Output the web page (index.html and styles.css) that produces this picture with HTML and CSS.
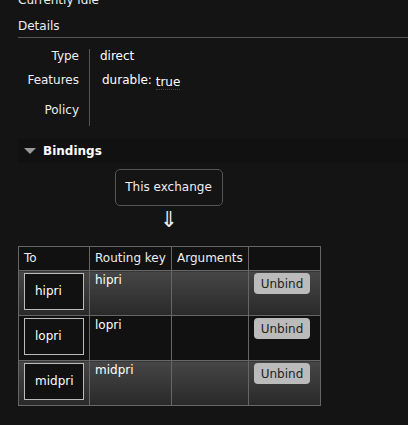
FILE: index.html
```html
<!DOCTYPE html>
<html lang="en">
<head>
  <meta charset="UTF-8" />
  <meta name="viewport" content="width=device-width, initial-scale=1" />
  <title>Exchange</title>
  <link rel="stylesheet" href="styles.css">
</head>
<body>

<div class="page">
  <p class="status">Currently idle</p>

  <h3 class="details-title">Details</h3>
  <table class="facts">
    <tr>
      <th>Type</th>
      <td>direct</td>
    </tr>
    <tr>
      <th>Features</th>
      <td><span class="feature">durable:</span> <abbr class="val">true</abbr></td>
    </tr>
    <tr>
      <th>Policy</th>
      <td></td>
    </tr>
  </table>

  <div class="section">
    <h2 class="section-title"><span class="tri"></span>Bindings</h2>
    <div class="bindings">
      <div class="source">
        <span class="this-exchange">This exchange</span>
        <span class="arrow">&#8659;</span>
      </div>
      <table class="list">
        <thead>
          <tr>
            <th>To</th>
            <th>Routing key</th>
            <th>Arguments</th>
            <th></th>
          </tr>
        </thead>
        <tbody>
          <tr class="alt1">
            <td><span class="queue">hipri</span></td>
            <td>hipri</td>
            <td></td>
            <td><button>Unbind</button></td>
          </tr>
          <tr class="alt2">
            <td><span class="queue">lopri</span></td>
            <td>lopri</td>
            <td></td>
            <td><button>Unbind</button></td>
          </tr>
          <tr class="alt1">
            <td><span class="queue">midpri</span></td>
            <td>midpri</td>
            <td></td>
            <td><button>Unbind</button></td>
          </tr>
        </tbody>
      </table>
    </div>
  </div>
</div>

</body>
</html>
```

FILE: styles.css
```css
    body {
      font-family: "DejaVu Sans", Verdana, sans-serif;
      font-size: 12px;
      margin: 0; padding: 0;
      background: #141414;
      color: #eee;
      overflow: hidden;
    }
    .page {
      padding-left: 18px;
      margin-top: -8px;
    }
    .status {
      margin: 0;
      height: 16px;
      line-height: 16px;
    }
    .details-title {
      margin: 0;
      padding-top: 10px;
      padding-bottom: 3px;
      font-size: 12px;
      font-weight: normal;
      line-height: 16px;
      border-bottom: 1px solid #555;
    }
    .facts {
      border-collapse: collapse;
      margin-top: 11px;
    }
    .facts th {
      width: 61px;
      text-align: right;
      font-weight: normal;
      padding: 0 10px 0 0;
      border-right: 1px solid #555;
      vertical-align: top;
    }
    .facts td {
      padding: 0 0 0 10px;
      vertical-align: top;
      color: #fff;
    }
    .facts tr:nth-child(1) th, .facts tr:nth-child(1) td { height: 24px; padding-top: 0; }
    .facts tr:nth-child(2) th, .facts tr:nth-child(2) td { height: 29px; }
    .facts tr:nth-child(3) th, .facts tr:nth-child(3) td { height: 23px; padding-top: 1px; }
    .feature {
      padding-left: 2px;
    }
    .val {
      text-decoration: none;
      border-bottom: 1px dotted #444;
      position: relative;
      top: 2px;
    }
    .section {
      margin-top: 13px;
    }
    .section-title {
      margin: 0;
      background: #111;
      height: 24px;
      font-size: 12px;
      font-weight: bold;
      display: flex;
      align-items: center;
      color: #fff;
    }
    .tri {
      width: 0;
      height: 0;
      border-left: 6px solid transparent;
      border-right: 6px solid transparent;
      border-top: 6px solid #999;
      margin: 0 7px 0 6px;
    }
    .bindings {
      padding-top: 6px;
    }
    .source {
      width: 302px;
      display: flex;
      flex-direction: column;
      align-items: center;
    }
    .this-exchange {
      display: block;
      border: 1px solid #555;
      border-radius: 5px;
      height: 35px;
      line-height: 35px;
      width: 106px;
      text-align: center;
      margin-left: -1px;
    }
    .arrow {
      display: block;
      font-size: 22px;
      line-height: 26px;
      height: 39px;
      margin-top: 1px;
    }
    .list {
      border-collapse: collapse;
    }
    .list th, .list td {
      border: 1px solid #666;
      text-align: left;
      vertical-align: top;
    }
    .list th {
      font-weight: normal;
      background: #111;
      height: 23px;
      padding: 0 5px;
      line-height: 23px;
    }
    .list th:nth-child(1) { width: 60px; }
    .list th:nth-child(2) { width: 71px; }
    .list th:nth-child(3) { width: 66px; }
    .list th:nth-child(4) { width: 61px; }
    .list td {
      height: 42px;
      padding: 2px 5px 0;
      color: #fff;
    }
    .list tr.alt1 td {
      background: linear-gradient(#464646, #292929);
    }
    .list tr.alt2 td {
      background: #111;
    }
    .queue {
      display: block;
      border: 1px solid #bbb;
      background: #111;
      line-height: 35px;
      padding-left: 10px;
      box-sizing: border-box;
      width: 60px;
      height: 37px;
    }
    .list button {
      background: #bbb;
      color: #222;
      border: none;
      border-radius: 4px;
      font-family: inherit;
      font-size: 12px;
      width: 56px;
      height: 21px;
      padding: 0;
    }
```
